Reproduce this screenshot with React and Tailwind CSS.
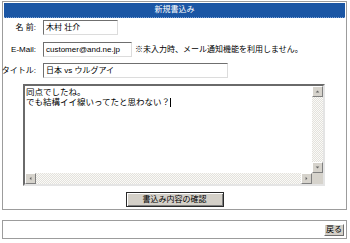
import React from 'react';

const FONT = "font-['Liberation_Sans','Noto_Sans_CJK_JP',sans-serif]";

function Field({ value, className }) {
  return (
    <div
      className={`h-[15px] bg-white border border-t-[#6f6f6f] border-l-[#6f6f6f] border-b-[#dcdcdc] border-r-[#dcdcdc] flex items-center px-[2px] leading-none whitespace-nowrap overflow-hidden ${className}`}
    >
      {value}
    </div>
  );
}

function Arrow({ dir }) {
  const points = {
    up: '1,4 4,1 7,4',
    down: '1,1 4,4 7,1',
    left: '4,1 1,4 4,7',
    right: '1,1 4,4 1,7',
  }[dir];
  const box = dir === 'up' || dir === 'down' ? '0 0 8 5' : '0 0 5 8';
  const size = dir === 'up' || dir === 'down' ? 'w-[5px] h-[3px]' : 'w-[3px] h-[5px]';
  return (
    <div className="w-[11px] h-[11px] shrink-0 bg-[#d6d3cc] border border-t-white border-l-white border-b-[#808080] border-r-[#808080] flex items-center justify-center">
      <svg viewBox={box} className={size}>
        <polygon points={points} fill="#666" />
      </svg>
    </div>
  );
}

const TRACK =
  'bg-[repeating-conic-gradient(#e4e2dc_0_25%,#fafaf8_0_50%)] bg-[length:2px_2px]';

export default function App() {
  return (
    <div className={`w-[350px] h-[243px] bg-white text-black text-[8px] ${FONT}`}>
      <div className="ml-[2px] mt-px w-[345px] border border-[#9c9c9c] p-px pb-[2px]">
        <div className="h-[15px] bg-[#1b56a4] text-white flex items-center justify-center leading-none border-b border-dotted border-[#7fa3d6]">
          新規書込み
        </div>

        <div className="flex items-center mt-[2px]">
          <span className="w-[32px] text-right leading-none whitespace-nowrap">名 前:</span>
          <Field value="木村 壮介" className="ml-[7px] w-[75px]" />
        </div>

        <div className="flex items-center mt-[7px]">
          <span className="w-[32px] text-right leading-none whitespace-nowrap">E-Mail:</span>
          <Field value="customer@and.ne.jp" className="ml-[7px] w-[89px]" />
          <span className="ml-[3px] leading-none whitespace-nowrap">※未入力時、メール通知機能を利用しません。</span>
        </div>

        <div className="flex items-center mt-[6px]">
          <span className="w-[32px] text-right leading-none whitespace-nowrap flex justify-end">タイトル:</span>
          <Field value="日本 vs ウルグアイ" className="ml-[7px] w-[185px]" />
        </div>

        <div className="ml-[19px] mt-[6px] w-[302px] h-[102px] border-2 border-t-[#6a6a6a] border-l-[#6a6a6a] border-b-[#e4e4e4] border-r-[#e4e4e4] bg-white flex flex-col">
          <div className="flex flex-1 min-h-0">
            <div className="flex-1 px-[1px] pt-[1px] text-[8.5px] leading-[10px]">
              <div>同点でしたね。</div>
              <div>
                でも結構イイ線いってたと思わない？
                <span className="inline-block w-px h-[9px] bg-black align-middle" />
              </div>
            </div>
            <div className={`w-[11px] flex flex-col ${TRACK}`}>
              <Arrow dir="up" />
              <div className="flex-1" />
              <Arrow dir="down" />
            </div>
          </div>
          <div className="flex h-[11px]">
            <div className={`flex-1 flex ${TRACK}`}>
              <Arrow dir="left" />
              <div className="flex-1" />
              <Arrow dir="right" />
            </div>
            <div className="w-[11px] h-[11px] bg-[#d6d3cc]" />
          </div>
        </div>

        <div className="flex justify-center mt-[6px]">
          <button className="w-[98px] h-[15px] bg-[#d4d0c8] border border-[#2a2a2a] shadow-[inset_1px_1px_0_#fff,inset_-1px_-1px_0_#808080] flex items-center justify-center leading-none text-[8px]">
            書込み内容の確認
          </button>
        </div>
      </div>

      <div className="ml-[2px] mt-[10px] w-[345px] h-[19px] border border-[#9c9c9c] flex items-center justify-end pr-[2px]">
        <button className="w-[20px] h-[12px] bg-[#d4d0c8] border border-t-white border-l-white border-b-[#6f6f6f] border-r-[#6f6f6f] flex items-center justify-center leading-none text-[8px]">
          戻る
        </button>
      </div>
    </div>
  );
}
